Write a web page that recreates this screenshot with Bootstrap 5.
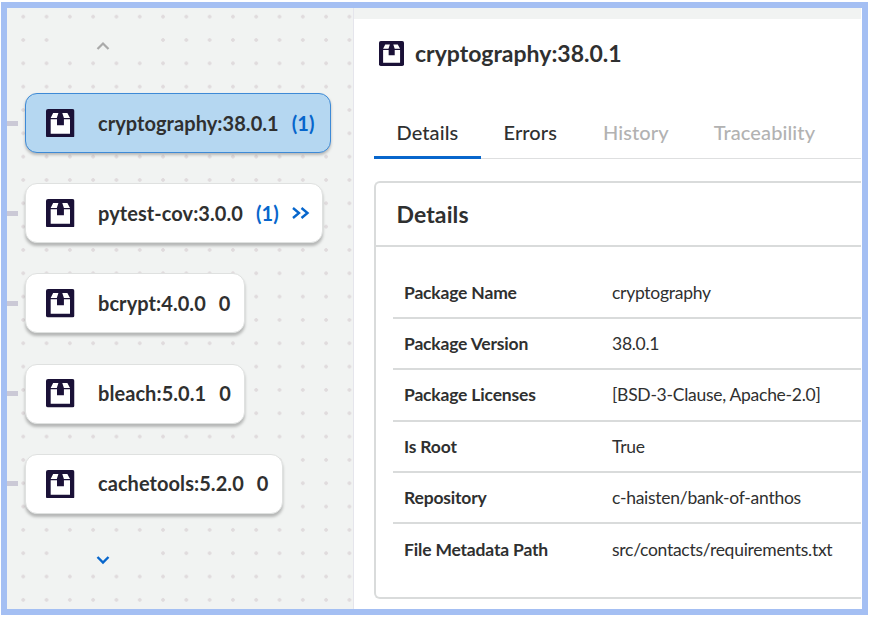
<!DOCTYPE html>
<html lang="en">
<head>
<meta charset="utf-8">
<meta name="viewport" content="width=device-width, initial-scale=1">
<title>cryptography:38.0.1</title>
<link href="https://cdn.jsdelivr.net/npm/bootstrap@5.3.0/dist/css/bootstrap.min.css" rel="stylesheet">
<style>
body { font-family: Lato, "Liberation Sans", sans-serif; color: #2f3030; width: 869px; height: 617px; padding: 2px 1px; }
.frame { width: 867px; height: 613px; border: 6px solid #a4bff3; }
.graph-pane {
  width: 347px; border-right: 1px solid #e5e5ec;
  background: #f1f3f2 radial-gradient(circle, #e0dbdd 1.5px, transparent 2.1px) 4.6px -3px / 23.31px 23.34px;
}
.pager { width: 107px; height: 21px; margin-left: 42px; background: #f1f3f2; }
.pager-up { margin-top: 27px; }
.pager-down { margin-top: 36px; }
.node-list { margin-top: 37px; display: grid; grid-auto-rows: 60px; row-gap: 30.2px; }
.connector { width: 11px; height: 5px; background: #cbc9d6; margin-right: 6.5px; }
.node-card { height: 60px; border: 1px solid #dfe1e0; border-radius: 12px; background: #fff; padding: 0 13.5px 0 20.5px; box-shadow: 0 3px 3px rgba(0,0,0,.25); font-size: 20px; font-weight: 700; letter-spacing: .06px; }
.node-card.selected { background: #b5d7f1; border-color: #3e8ad6; box-shadow: 0 2px 3px rgba(0,0,0,.25); padding-right: 15px; }
.node-name { margin-left: 23.5px; }
.node-count { margin-left: 13px; }
.node-name, .node-count { padding-bottom: 1px; }
.link-blue { color: #0766cc; }
.expand-icon { margin: 0 -1.5px 0 13px; }
.detail-pane { border-top: 11px solid #f1f3f2; margin-right: 1px; padding-left: 20px; }
.pane-title { margin: 19px 0 0 5px; height: 30px; font-size: 23px; font-weight: 700; gap: 11px; }
.pane-tabs { margin-top: 40px; height: 51px; border-bottom: 1px solid #dedfe0; font-size: 20px; font-weight: 500; letter-spacing: .1px; }
.pane-tabs .nav-link { color: #2f3030; padding: 9px 23px 0 22.5px; height: 51px; line-height: 30px; }
.pane-tabs .nav-link.active { border-bottom: 3px solid #0766cc; width: 107px; padding-right: 0; }
.pane-tabs .nav-link.disabled { color: #b2b2b2; padding-left: 23px; padding-right: 22px; }
.detail-card { margin-top: 22px; height: 418px; border: 2px solid #d9dbdb; border-right: 0; border-radius: 6px 0 0 6px; }
.detail-head { height: 64px; border-bottom: 2px solid #d9dbdb; padding-left: 20.5px; font-size: 23px; font-weight: 700; letter-spacing: .1px; }
.detail-rows { margin: 21px 0 0 17px; font-size: 17.5px; }
.detail-row { height: 51.2px; border-bottom: 2px solid #d9dbdb; padding: 1px 0 0 11px; }
.detail-row:last-child { border-bottom: 0; }
.detail-row dt { width: 208px; font-weight: 700; letter-spacing: -.18px; }
.detail-row dd { font-weight: 400; letter-spacing: -.27px; }
</style>
<script src="https://cdn.jsdelivr.net/npm/bootstrap@5.3.0/dist/js/bootstrap.bundle.min.js"></script>
</head>
<body class="overflow-hidden bg-white">
<svg class="d-none">
  <symbol id="package" viewBox="0 0 28 28">
    <rect width="28" height="28" rx="2" fill="#1a1137"/>
    <path fill="#fff" d="M7 4h5.2L10.600 8.800H4.600zM16 4h5L23.600 8.800H17.600zM4.600 10H10.800v6h6.800v-6h6v14.400H4.600z"/>
  </symbol>
</svg>
<main class="frame d-flex overflow-hidden">
  <section class="graph-pane flex-shrink-0">
    <div class="pager pager-up d-flex justify-content-center align-items-center">
      <svg width="14" height="10" fill="none" stroke="#aaa" stroke-width="2.2"><path d="M1.5 8L7 2.5 12.5 8"/></svg>
    </div>
    <div class="node-list">
      <div class="d-flex align-items-center"><span class="connector"></span>
        <div class="node-card selected d-flex align-items-center"><svg width="28.5" height="28.5"><use href="#package"/></svg><span class="node-name">cryptography:38.0.1</span><span class="node-count link-blue">(1)</span></div></div>
      <div class="d-flex align-items-center"><span class="connector"></span>
        <div class="node-card d-flex align-items-center"><svg width="28.5" height="28.5"><use href="#package"/></svg><span class="node-name">pytest-cov:3.0.0</span><span class="node-count link-blue">(1)</span>
          <svg class="expand-icon" width="18" height="14" fill="none" stroke="#0766cc" stroke-width="2.4"><path d="M1 2l6 5-6 5M9.5 2l6 5-6 5"/></svg></div></div>
      <div class="d-flex align-items-center"><span class="connector"></span>
        <div class="node-card d-flex align-items-center"><svg width="28.5" height="28.5"><use href="#package"/></svg><span class="node-name">bcrypt:4.0.0</span><span class="node-count">0</span></div></div>
      <div class="d-flex align-items-center"><span class="connector"></span>
        <div class="node-card d-flex align-items-center"><svg width="28.5" height="28.5"><use href="#package"/></svg><span class="node-name">bleach:5.0.1</span><span class="node-count">0</span></div></div>
      <div class="d-flex align-items-center"><span class="connector"></span>
        <div class="node-card d-flex align-items-center"><svg width="28.5" height="28.5"><use href="#package"/></svg><span class="node-name">cachetools:5.2.0</span><span class="node-count">0</span></div></div>
    </div>
    <div class="pager pager-down d-flex justify-content-center align-items-center">
      <svg width="14" height="10" fill="none" stroke="#0766cc" stroke-width="2.4"><path d="M1.5 2L7 7.5 12.5 2"/></svg>
    </div>
  </section>
  <section class="detail-pane flex-grow-1">
    <div class="pane-title d-flex align-items-center"><svg width="25" height="25"><use href="#package"/></svg><span>cryptography:38.0.1</span></div>
    <nav class="pane-tabs nav flex-nowrap">
      <a class="nav-link active" href="#">Details</a>
      <a class="nav-link" href="#">Errors</a>
      <a class="nav-link disabled">History</a>
      <a class="nav-link disabled">Traceability</a>
    </nav>
    <div class="detail-card">
      <div class="detail-head d-flex align-items-center">Details</div>
      <dl class="detail-rows mb-0">
        <div class="detail-row d-flex align-items-center"><dt>Package Name</dt><dd class="mb-0">cryptography</dd></div>
        <div class="detail-row d-flex align-items-center"><dt>Package Version</dt><dd class="mb-0">38.0.1</dd></div>
        <div class="detail-row d-flex align-items-center"><dt>Package Licenses</dt><dd class="mb-0">[BSD-3-Clause, Apache-2.0]</dd></div>
        <div class="detail-row d-flex align-items-center"><dt>Is Root</dt><dd class="mb-0">True</dd></div>
        <div class="detail-row d-flex align-items-center"><dt>Repository</dt><dd class="mb-0">c-haisten/bank-of-anthos</dd></div>
        <div class="detail-row d-flex align-items-center"><dt>File Metadata Path</dt><dd class="mb-0">src/contacts/requirements.txt</dd></div>
      </dl>
    </div>
  </section>
</main>
</body>
</html>
